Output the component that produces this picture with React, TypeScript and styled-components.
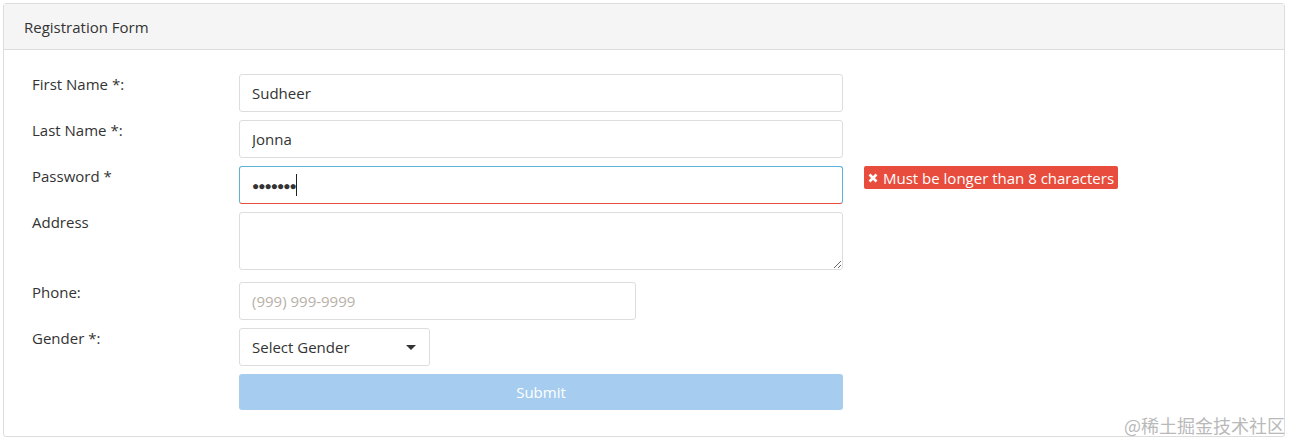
import styled, { createGlobalStyle } from "styled-components";

const Global = createGlobalStyle`
  html, body { margin: 0; background: #fff; }
  body { font-family: "Open Sans", "Noto Sans", sans-serif; color: #333; }
  * { box-sizing: border-box; }
`;

const Page = styled.div`
  position: relative;
  width: 1291px;
  height: 442px;
  padding: 3px 6px 0 3px;
`;

const Card = styled.div`
  border: 1px solid #ddd;
  border-radius: 3px;
  background: #fff;
  height: 434px;
`;

const CardHeader = styled.div`
  height: 46px;
  padding: 0 20px;
  display: flex;
  align-items: center;
  background: #f5f5f5;
  border-bottom: 1px solid #ddd;
  font-size: 15px;
  color: #333;
`;

const Body = styled.div`
  padding: 24px 28px 0;
  display: flex;
  flex-direction: column;
  gap: 8px;
`;

const Row = styled.div<{ $gap?: number }>`
  display: grid;
  grid-template-columns: 207px 604px auto;
  align-items: start;
  margin-top: ${(p) => p.$gap ?? 0}px;
`;

const Label = styled.label`
  font-size: 15px;
  color: #333;
  padding-top: 0;
`;

const Input = styled.input<{ $w?: number }>`
  width: ${(p) => (p.$w ? `${p.$w}px` : "100%")};
  height: 38px;
  padding: 0 12px;
  font: inherit;
  font-size: 15px;
  color: #333;
  border: 1px solid #ddd;
  border-radius: 3px;
  outline: none;
  &::placeholder { color: #b8b0a8; }
`;

const Area = styled.textarea`
  width: 100%;
  height: 58px;
  border: 1px solid #ddd;
  border-radius: 3px;
  resize: both;
  font: inherit;
  display: block;
`;

const Select = styled.div`
  width: 191px;
  height: 38px;
  border: 1px solid #ddd;
  border-radius: 3px;
  padding: 0 12px;
  display: flex;
  align-items: center;
  justify-content: space-between;
  font-size: 15px;
  color: #333;
`;

const Caret = styled.span`
  width: 0;
  height: 0;
  border-left: 5px solid transparent;
  border-right: 5px solid transparent;
  border-top: 5px solid #333;
  margin-right: 1px;
`;

const ErrorTag = styled.span`
  margin-left: 21px;
  height: 23px;
  display: inline-flex;
  align-items: center;
  gap: 5px;
  padding: 0 4px;
  background: #e74c3c;
  color: #fff;
  font-size: 15px;
  border-radius: 2px;
  white-space: nowrap;
  justify-self: start;
`;

const Submit = styled.button`
  grid-column: 2;
  height: 36px;
  border: none;
  border-radius: 3px;
  background: #a6cdf0;
  color: #fff;
  font: inherit;
  font-size: 15px;
`;

const Cursor = styled.span`
  display: inline-block;
  width: 1px;
  height: 22px;
  background: #222;
  vertical-align: middle;
`;

const PwdBox = styled.div`
  height: 38px;
  border: 1px solid #5cb3d6;
  border-bottom-color: #e74c3c;
  border-radius: 3px;
  padding: 0 12px;
  display: flex;
  align-items: center;
  font-size: 12px;
  letter-spacing: -1px;
  color: #333;
`;

const Watermark = styled.div`
  position: absolute;
  right: 6px;
  bottom: 4px;
  font-family: "Noto Sans CJK SC", sans-serif;
  font-size: 18px;
  color: #b9b9b9;
`;

export default function App() {
  return (
    <Page>
      <Global />
      <Card>
        <CardHeader>Registration Form</CardHeader>
        <Body>
          <Row>
            <Label>First Name *:</Label>
            <Input defaultValue="Sudheer" />
          </Row>
          <Row>
            <Label>Last Name *:</Label>
            <Input defaultValue="Jonna" />
          </Row>
          <Row>
            <Label>Password *</Label>
            <PwdBox>
              ●●●●●●●<Cursor />
            </PwdBox>
            <ErrorTag>
              <svg width="10" height="10" viewBox="0 0 10 10">
                <path d="M1.5 1.5L8.5 8.5M8.5 1.5L1.5 8.5" stroke="#fff" strokeWidth="2.6" />
              </svg>
              Must be longer than 8 characters
            </ErrorTag>
          </Row>
          <Row>
            <Label>Address</Label>
            <Area />
          </Row>
          <Row $gap={4}>
            <Label>Phone:</Label>
            <Input $w={397} placeholder="(999) 999-9999" />
          </Row>
          <Row>
            <Label>Gender *:</Label>
            <Select>
              Select Gender <Caret />
            </Select>
          </Row>
          <Row>
            <Submit>Submit</Submit>
          </Row>
        </Body>
      </Card>
      <Watermark>@稀土掘金技术社区</Watermark>
    </Page>
  );
}
